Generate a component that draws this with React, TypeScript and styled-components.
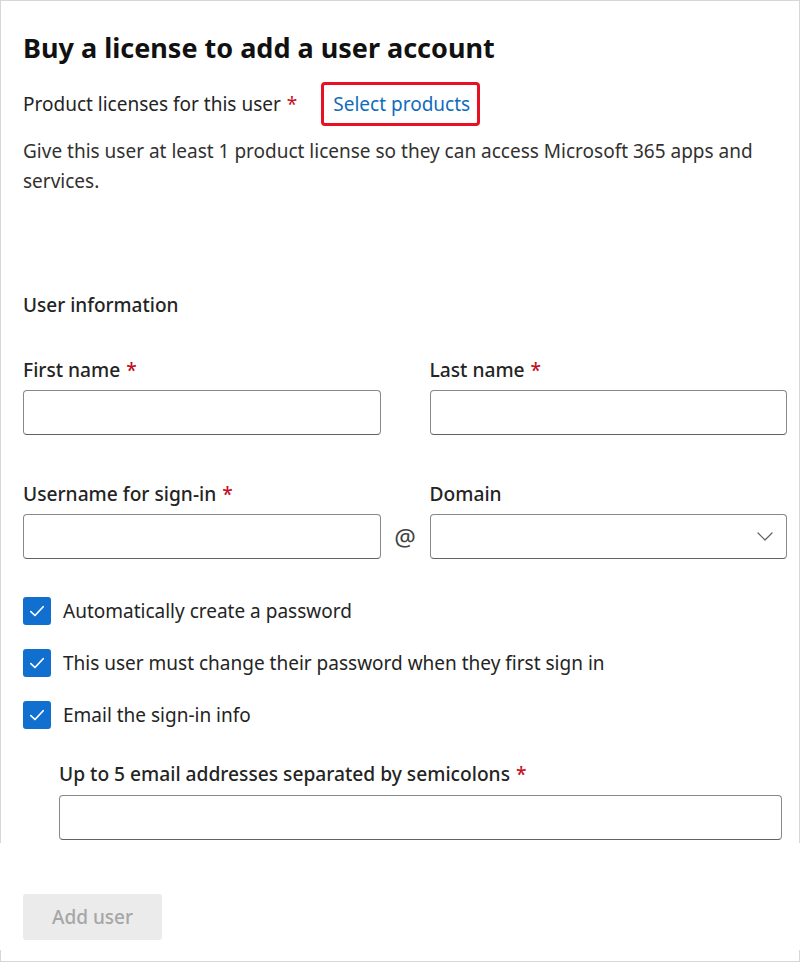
import styled, { createGlobalStyle } from 'styled-components';

const GlobalStyle = createGlobalStyle`
  html, body {
    margin: 0;
    padding: 0;
    background: #ffffff;
  }
  body {
    font-family: 'Segoe UI', 'Noto Sans', 'Open Sans', sans-serif;
    color: #242424;
  }
  * {
    box-sizing: border-box;
  }
`;

const Panel = styled.div`
  width: 800px;
  border: 1px solid #d6d6d6;
  border-bottom: none;
  padding: 29px 12px 3px 22px;
`;

const Title = styled.h1`
  margin: 0;
  font-size: 27px;
  line-height: 36px;
  font-weight: 700;
  color: #111111;
`;

const ProductRow = styled.div`
  display: flex;
  align-items: center;
  gap: 24px;
  margin-top: 16px;
  height: 44px;
`;

const FieldText = styled.span`
  font-size: 19px;
  line-height: 24px;
`;

const Req = styled.span`
  color: #c50f1f;
  margin-left: 6px;
`;

const LinkBox = styled.a`
  display: flex;
  align-items: center;
  height: 44px;
  padding: 0 7px 0 9px;
  border: 3px solid #e81123;
  border-radius: 4px;
  color: #0f6cbd;
  font-size: 19px;
  text-decoration: none;
  cursor: pointer;
`;

const Description = styled.p`
  margin: 10px 0 0;
  font-size: 19px;
  line-height: 30px;
  color: #323130;
  padding-right: 20px;
`;

const SectionTitle = styled.h2`
  margin: 94px 0 0;
  font-size: 19px;
  line-height: 30px;
  font-weight: 500;
`;

const Grid = styled.div<{ $top: number }>`
  display: grid;
  grid-template-columns: 1fr 49px 1fr;
  margin-top: ${(p) => p.$top}px;
`;

const Field = styled.div`
  display: flex;
  flex-direction: column;
`;

const Label = styled.label`
  font-size: 19.2px;
  line-height: 24px;
  font-weight: 500;
  margin-bottom: 8px;
`;

const Input = styled.input`
  height: 45px;
  width: 100%;
  border: 1px solid #8a8886;
  border-bottom-color: #616161;
  border-radius: 4px;
  padding: 0 12px;
  font-size: 19px;
  font-family: inherit;
  background: #ffffff;
`;

const At = styled.div`
  align-self: end;
  height: 45px;
  display: flex;
  align-items: center;
  justify-content: center;
  font-size: 24px;
  color: #424242;
`;

const Select = styled.div`
  height: 45px;
  border: 1px solid #8a8886;
  border-bottom-color: #616161;
  border-radius: 4px;
  display: flex;
  align-items: center;
  justify-content: flex-end;
  padding-right: 13px;
`;

const Checks = styled.div`
  display: flex;
  flex-direction: column;
  gap: 24px;
  margin-top: 38px;
`;

const CheckRow = styled.label`
  display: flex;
  align-items: center;
  gap: 12px;
  height: 28px;
  font-size: 19px;
`;

const Box = styled.span`
  width: 28px;
  height: 28px;
  border-radius: 3px;
  background: #1170cf;
  display: flex;
  align-items: center;
  justify-content: center;
  flex-shrink: 0;
`;

const EmailField = styled(Field)`
  margin: 33px 5px 0 36px;
  & > label {
    margin-bottom: 9px;
  }
`;

const Footer = styled.div`
  width: 800px;
  padding: 51px 0 10px 23px;
`;

const Button = styled.button`
  width: 139px;
  height: 46px;
  border: none;
  border-radius: 3px;
  background: #ebebeb;
  color: #a6a6a6;
  font-size: 19px;
  font-weight: 500;
  font-family: inherit;
`;

const FooterEdge = styled.div`
  width: 800px;
  height: 12px;
  border: 1px solid #d6d6d6;
  border-top: none;
`;

function Check() {
  return (
    <svg width="18" height="18" viewBox="0 0 16 16" fill="none">
      <path d="M2.5 8.5 L6.2 12 L13.5 4.2" stroke="#ffffff" strokeWidth="1.5" strokeLinecap="round" strokeLinejoin="round" />
    </svg>
  );
}

function Chevron() {
  return (
    <svg width="16" height="9" viewBox="0 0 16 9" fill="none">
      <path d="M1 1 L8 8 L15 1" stroke="#616161" strokeWidth="1.2" strokeLinecap="round" strokeLinejoin="round" />
    </svg>
  );
}

const checkItems = [
  'Automatically create a password',
  'This user must change their password when they first sign in',
  'Email the sign-in info',
];

function App() {
  return (
    <>
      <GlobalStyle />
      <Panel>
        <Title>Buy a license to add a user account</Title>
        <ProductRow>
          <FieldText>
            Product licenses for this user<Req>*</Req>
          </FieldText>
          <LinkBox>Select products</LinkBox>
        </ProductRow>
        <Description>
          Give this user at least 1 product license so they can access Microsoft 365 apps and services.
        </Description>

        <SectionTitle>User information</SectionTitle>

        <Grid $top={38}>
          <Field>
            <Label>
              First name<Req>*</Req>
            </Label>
            <Input />
          </Field>
          <div />
          <Field>
            <Label>
              Last name<Req>*</Req>
            </Label>
            <Input />
          </Field>
        </Grid>

        <Grid $top={47}>
          <Field>
            <Label>
              Username for sign-in<Req>*</Req>
            </Label>
            <Input />
          </Field>
          <At>@</At>
          <Field>
            <Label>Domain</Label>
            <Select>
              <Chevron />
            </Select>
          </Field>
        </Grid>

        <Checks>
          {checkItems.map((t) => (
            <CheckRow key={t}>
              <Box>
                <Check />
              </Box>
              {t}
            </CheckRow>
          ))}
        </Checks>

        <EmailField>
          <Label>
            Up to 5 email addresses separated by semicolons<Req>*</Req>
          </Label>
          <Input />
        </EmailField>
      </Panel>
      <Footer>
        <Button disabled>Add user</Button>
      </Footer>
      <FooterEdge />
    </>
  );
}

export default App;
